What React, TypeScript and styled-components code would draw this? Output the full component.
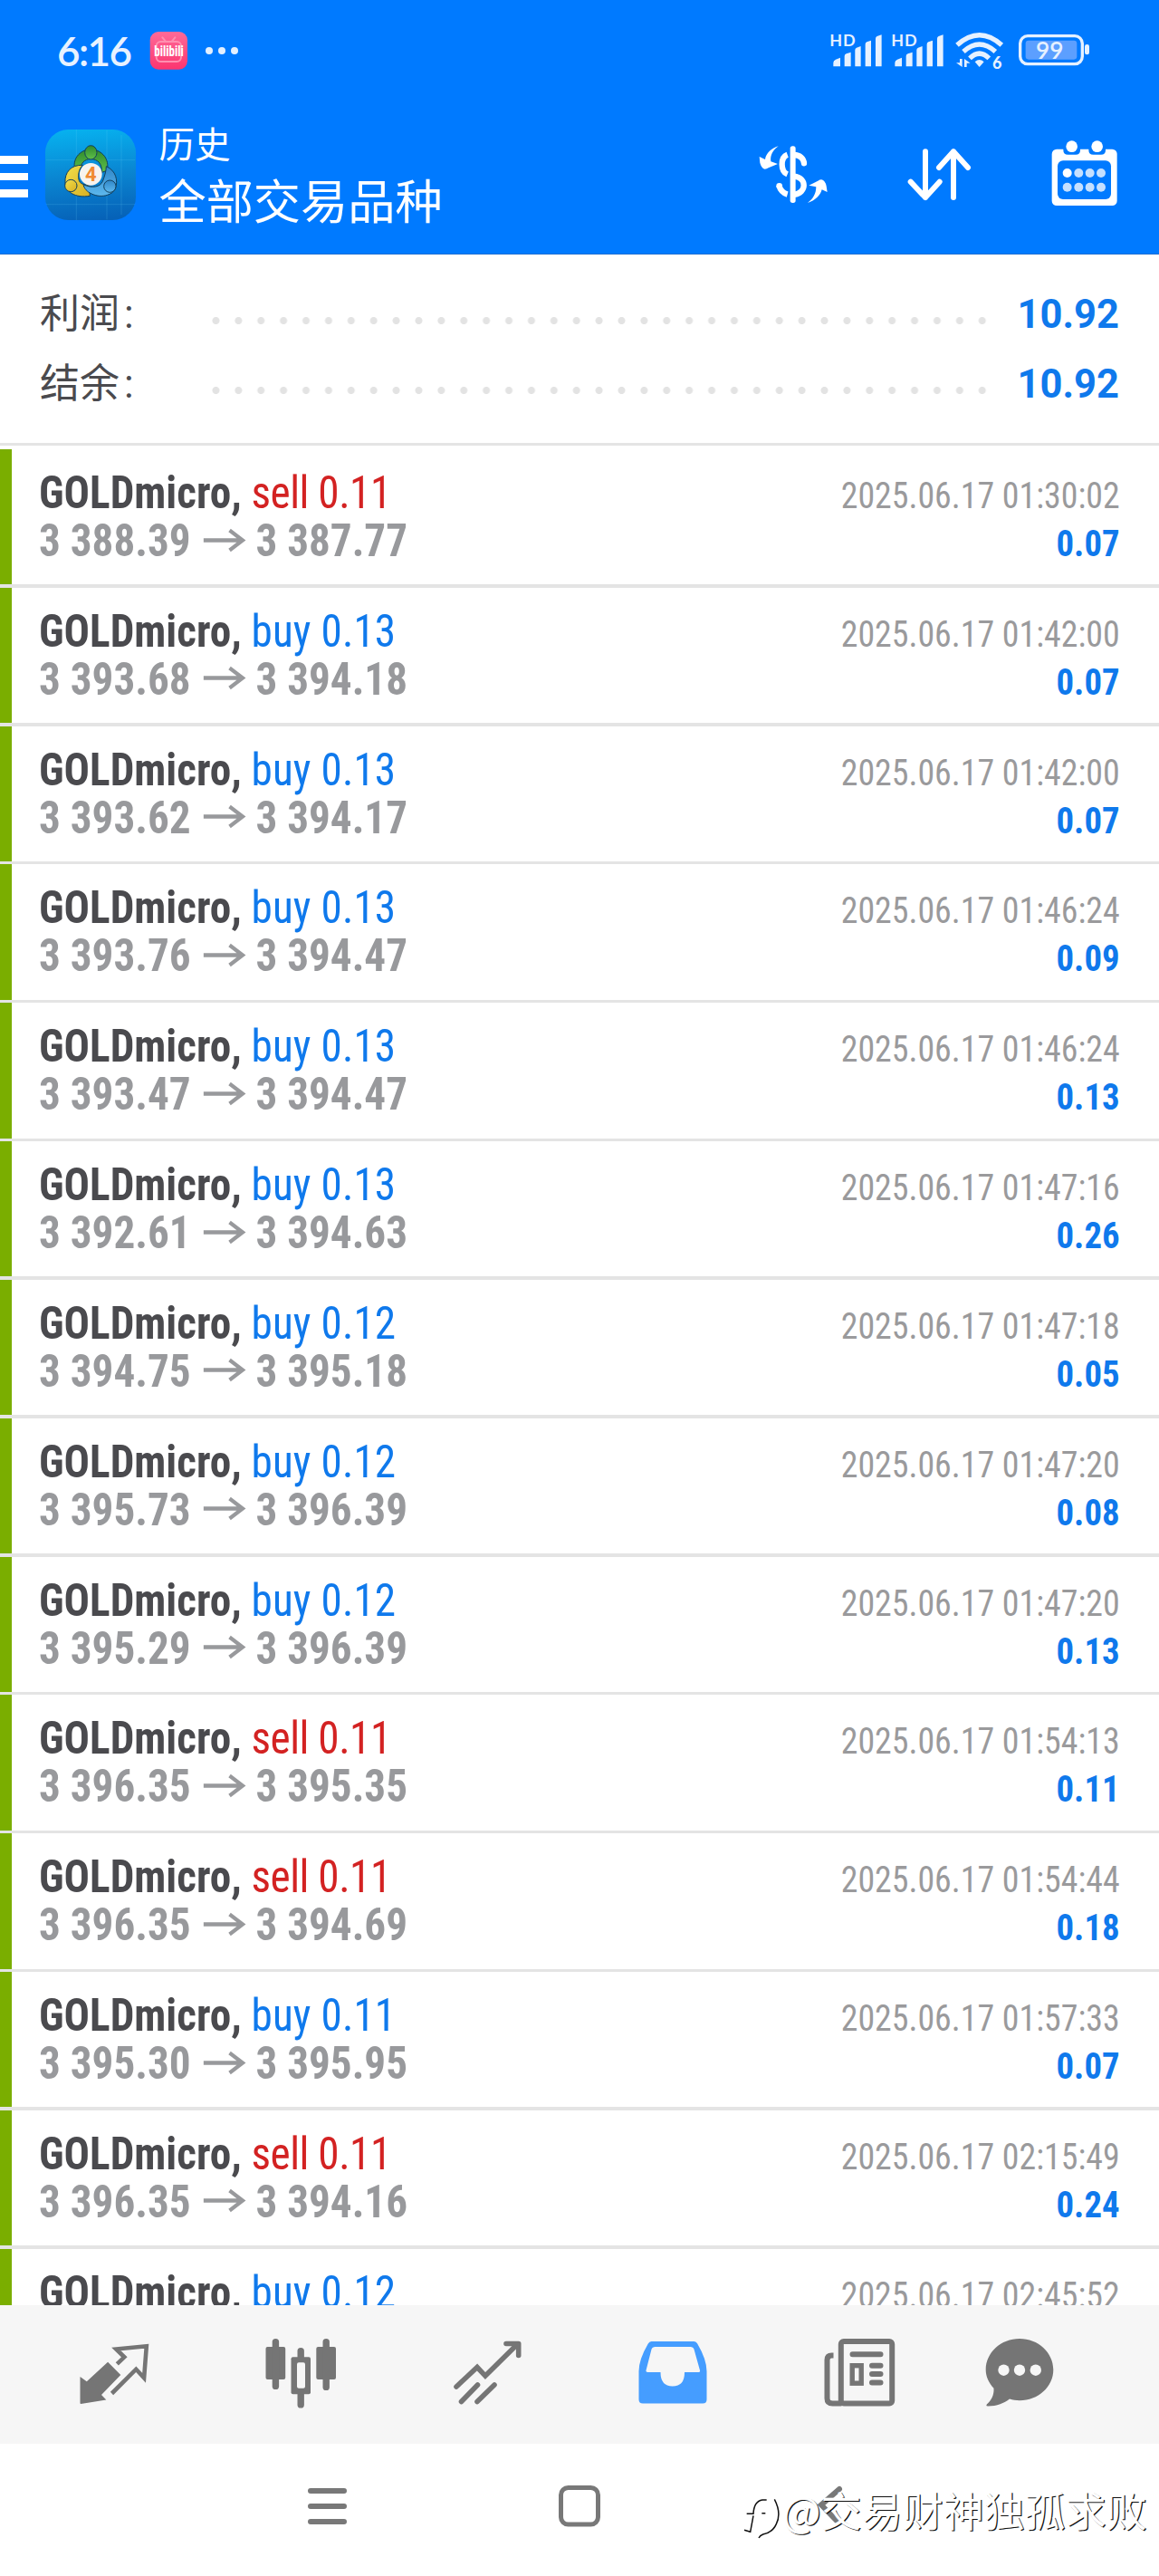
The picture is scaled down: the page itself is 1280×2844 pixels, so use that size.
import styled, { createGlobalStyle } from "styled-components";

const colors = {
  primary: "#007aff",
  buy: "#0f79ec",
  sell: "#d32222",
  dark: "#4a4a4e",
  grey: "#98999c",
  line: "#e4e4e4",
  profit: "#7aae00",
  tab: "#757575",
};

const GlobalStyle = createGlobalStyle`
  * {
    box-sizing: border-box;
  }
  body {
    margin: 0;
    background: #fff;
    font-family: Roboto, "Noto Sans CJK SC", sans-serif;
  }
  svg {
    display: block;
    flex: none;
    overflow: visible;
  }
`;

const Phone = styled.div`
  width: 1280px;
  height: 2844px;
  display: flex;
  flex-direction: column;
  overflow: hidden;
  background: #fff;
`;

const Header = styled.header`
  flex: none;
  height: 281px;
  background: ${colors.primary};
  border-bottom: 1px solid #1c6fd2;
  color: #fff;
`;

const StatusBar = styled.div`
  height: 111px;
  padding: 0 76px 0 63px;
  display: flex;
  align-items: center;
  justify-content: space-between;
`;

const StatusGroup = styled.div`
  display: flex;
  align-items: center;
`;

const Clock = styled.span`
  width: 102px;
  font: 600 44px/50px Lato, sans-serif;
  letter-spacing: -1.6px;
  color: #e8f2ff;
`;

const Dots = styled.div`
  display: flex;
  gap: 6.3px;
  margin-left: 19px;

  i {
    width: 8px;
    height: 8px;
    border-radius: 50%;
    background: #e3f0ff;
  }
`;

const Signals = styled.div`
  display: flex;
  gap: 9.4px;
  margin-right: 12px;
`;

const Toolbar = styled.div`
  height: 160px;
  display: flex;
  align-items: center;
  padding-right: 45px;
`;

const Burger = styled.div`
  width: 31px;
  height: 46px;
  margin-top: 8px;
  display: flex;
  flex-direction: column;
  justify-content: space-between;

  i {
    height: 8.6px;
    background: #fff;
  }
`;

const AppBadge = styled.div`
  margin: 4px 26px 0 18.5px;
`;

const Titles = styled.div`
  flex: 1;
  margin-top: 6px;
  font-family: "Noto Sans CJK SC", sans-serif;
`;

const Subtitle = styled.div`
  font-size: 39.6px;
  line-height: 50px;
`;

const Title = styled.div`
  font-size: 52.2px;
  line-height: 74px;
`;

const Actions = styled.div`
  display: flex;
  gap: 85px;
`;

const Summary = styled.section`
  flex: none;
  height: 211px;
  padding: 27px 44px 0 44px;
  border-bottom: 3px solid ${colors.line};
`;

const SummaryRow = styled.div`
  height: 77.3px;
  display: flex;
  align-items: center;
`;

const SummaryLabel = styled.span`
  width: 182px;
  font-size: 44px;
  line-height: 60px;
  color: ${colors.dark};

  i {
    font-style: normal;
    margin-left: 5px;
  }
`;

const Leader = styled.span`
  width: 871.5px;
  height: 10px;
  margin-top: 14px;
  background: radial-gradient(circle, #e3e3e3 3.6px, transparent 4.4px) 0 0 /
    24.9px 10px;
`;

const SummaryValue = styled.b`
  flex: 1;
  margin-top: 3px;
  text-align: right;
  font-size: 43.5px;
  font-weight: 700;
  line-height: 60px;
  color: ${colors.buy};
`;

const DealList = styled.main`
  flex: none;
  height: 2052.5px;
  padding-top: 4px;
  overflow: hidden;
`;

const DealRow = styled.article`
  height: 152.83px;
  display: flex;
  justify-content: space-between;
  padding: 22px 43.5px 0 30px;
  border-left: 13px solid ${colors.profit};
  position: relative;
  font-family: "Roboto Condensed", Roboto, sans-serif;
  font-stretch: 75%;
  white-space: pre;

  &::after {
    content: "";
    position: absolute;
    left: -13px;
    right: 0;
    bottom: 0;
    height: 3.5px;
    background: ${colors.line};
  }
`;

const DealInfo = styled.div`
  font-size: 49.3px;
  line-height: 53px;
  transform: scaleX(0.957);
  transform-origin: left;
`;

const Symbol = styled.b`
  font-weight: 700;
  color: ${colors.dark};
`;

const Side = styled.span<{ $side: "buy" | "sell" }>`
  color: ${(p) => colors[p.$side]};
  letter-spacing: ${(p) => (p.$side === "sell" ? "-0.5px" : "0.1px")};
`;

const Prices = styled.div`
  display: flex;
  align-items: center;
  font-weight: 700;
  color: ${colors.grey};

  svg {
    margin: 0 13px 0 15px;
  }
`;

const DealMeta = styled.div`
  padding-top: 2px;
  font-size: 41.5px;
  line-height: 53px;
  text-align: right;
`;

const Time = styled.div`
  color: #9a9a9c;
  transform: scaleX(0.912);
  transform-origin: right;
`;

const Profit = styled.div`
  font-weight: 700;
  color: ${colors.buy};
  transform: scaleX(0.935);
  transform-origin: right;
`;

const TabBar = styled.nav`
  flex: none;
  height: 153.3px;
  padding: 0 0 3px 23.7px;
  display: grid;
  grid-template-columns: repeat(5, 205.6px) 148px;
  align-items: center;
  justify-items: center;
  background: #f6f6f6;
  color: ${colors.tab};
`;

const SystemNav = styled.footer`
  flex: 1;
  position: relative;
  display: flex;
  padding: 44px 0 0 338px;
  color: #787878;
`;

const NavSlot = styled.div<{ $gap?: number }>`
  margin-left: ${(p) => p.$gap ?? 0}px;
`;

const Watermark = styled.div`
  position: absolute;
  left: 820px;
  top: 38px;
  display: flex;
  align-items: center;
  color: #fff;
  font: 400 45px/70px "Noto Sans CJK SC", sans-serif;
  text-shadow: 1.3px 1.3px 0 #111;
  white-space: nowrap;

  span {
    margin-left: -2px;
  }
`;

const BiliIcon = () => (
  <svg width="42.7" height="43.3" viewBox="45 40 128 130">
    <defs>
      <linearGradient id="bili" x1="0" y1="0" x2="0" y2="1">
        <stop offset="0" stopColor="#ff6a98" />
        <stop offset="1" stopColor="#fb3570" />
      </linearGradient>
    </defs>
    <rect x="47" y="43" width="124" height="125" rx="28" fill="url(#bili)" />
    <g fill="none" stroke="#ff8fb0" strokeWidth="6" strokeLinecap="round">
      <rect x="68" y="76" width="82" height="66" rx="14" />
      <path d="M88 62l10 12M130 62l-10 12" />
    </g>
    <text
      x="61"
      y="124"
      fill="#fff"
      fontFamily="Roboto Condensed"
      fontWeight="700"
      fontSize="48"
      textLength="97"
      lengthAdjust="spacingAndGlyphs"
    >
      bilibili
    </text>
  </svg>
);

const SignalIcon = () => (
  <svg width="58.3" height="41.7" viewBox="50 45 175 125" fill="#e6f1ff">
    <text x="48" y="93" fontFamily="Lato" fontWeight="700" fontSize="54" textLength="85">
      HD
    </text>
    <path d="M60 160v-12q0-8 8-11l15-6v29zM97 160v-34q0-6 6-8l15-5v47zM132 160v-54q0-6 5-8l14-5v67zM166 160v-73q0-6 5-8l14-5v86zM200 160V68q0-6 5-8l15-5v105z" />
  </svg>
);

const WifiIcon = () => (
  <svg width="53.3" height="43.3" viewBox="465 45 160 130" fill="#e6f1ff">
    <g fill="none" stroke="#e6f1ff" strokeWidth="16">
      <path d="M471 92Q545 26 619 92" />
      <path d="M492 114Q545 66 598 114" />
      <path d="M513 136Q545 105 577 136" />
    </g>
    <path d="M530 148q15-14 30 0l-15 17z" />
    <path d="M480 138h8v27l-20-14h12zM495 165v-27l20 14h-12v13z" />
    <text x="588" y="170" fontFamily="Lato" fontWeight="900" fontSize="54">
      6
    </text>
  </svg>
);

const BatteryIcon = () => (
  <svg width="80" height="38" viewBox="671 49 240 114">
    <rect x="679" y="60" width="206" height="93" rx="25" fill="none" stroke="#e6f1ff" strokeWidth="10" />
    <rect x="697" y="75" width="170" height="63" rx="10" fill="#5c9fff" />
    <rect x="893" y="88" width="15" height="34" rx="7" fill="#e6f1ff" />
    <text x="731" y="135" fill="#e6f1ff" fontFamily="Lato" fontWeight="600" fontSize="79">
      99
    </text>
  </svg>
);

const AppIcon = () => (
  <svg width="100" height="100" viewBox="148 42 300 300">
    <defs>
      <linearGradient id="tile" x1="0.4" y1="0" x2="0.5" y2="1">
        <stop offset="0" stopColor="#07b0ee" />
        <stop offset="0.5" stopColor="#0a86d2" />
        <stop offset="1" stopColor="#0662b8" />
      </linearGradient>
      <linearGradient id="green" x1="0" y1="0" x2="0" y2="1">
        <stop offset="0" stopColor="#2f8a2c" />
        <stop offset="1" stopColor="#5fc04a" />
      </linearGradient>
      <linearGradient id="gold" x1="0" y1="0" x2="1" y2="1">
        <stop offset="0" stopColor="#f2e04c" />
        <stop offset="1" stopColor="#d8b022" />
      </linearGradient>
      <linearGradient id="sky" x1="0" y1="0" x2="0" y2="1">
        <stop offset="0" stopColor="#2f86c8" />
        <stop offset="1" stopColor="#5db8ee" />
      </linearGradient>
    </defs>
    <rect x="148" y="42" width="300" height="300" rx="76" fill="url(#tile)" />
    <path
      d="M251 42v300M400 60v264M150 143h296M150 290h296M352 44v296"
      stroke="#7fe0ff"
      strokeOpacity="0.16"
      strokeWidth="3"
    />
    <g stroke="#123f5c" strokeWidth="3">
      <path
        d="M246 176C238 140 258 112 299 106c40 6 62 34 54 72l-18 6c2-30-14-44-36-44s-34 14-34 34z"
        fill="url(#green)"
      />
      <path
        d="M272 160c-40-2-60 26-58 56 0 32 32 54 82 46l-4-36c-22 0-34-8-34-26 0-16 2-26 14-40z"
        fill="url(#gold)"
      />
      <path
        d="M350 164c32 14 40 46 30 74-10 22-50 34-84 14-14-8-20-18-22-28 30 14 56 8 64-10 6-16 12-34 12-50z"
        fill="url(#sky)"
      />
      <ellipse cx="299" cy="118" rx="20" ry="23" fill="url(#green)" />
      <circle cx="233" cy="228" r="20" fill="url(#gold)" />
      <circle cx="362" cy="230" r="20" fill="url(#sky)" />
    </g>
    <circle cx="299" cy="190" r="37" fill="#f7f3ee" />
    <text
      x="299"
      y="214"
      textAnchor="middle"
      fill="#f08a32"
      fontFamily="Roboto"
      fontWeight="700"
      fontSize="66"
    >
      4
    </text>
  </svg>
);

const CurrencyIcon = () => (
  <svg width="78.3" height="76" viewBox="110 72 235 228" fill="#fff">
    <rect x="217" y="97" width="18" height="188" rx="8" />
    <g fill="none" stroke="#fff" strokeWidth="19">
      <path d="M208 125C184 134 184 180 208 190" />
      <path d="M230 126C250 126 262 140 263 154" strokeLinecap="round" />
      <path d="M230 197C274 202 272 252 230 258" />
      <path d="M208 257C194 253 184 242 180 228" />
    </g>
    <circle cx="181" cy="229" r="10" />
    <path d="M178 97C156 103 137 120 134 141L115 132 117 152q4 18 16 21 6 0 12-4l31-13-23-8C150 127 160 110 178 97z" />
    <path d="M275 285C300 277 317 261 322 241L340 249 337 229q-4-18-16-21-6 0-12 4l-30 15 24 5C303 254 294 271 275 285z" />
  </svg>
);

const SortIcon = () => (
  <svg
    width="75"
    height="76"
    viewBox="600 72 225 228"
    fill="none"
    stroke="#fff"
    strokeWidth="18"
    strokeLinecap="round"
    strokeLinejoin="round"
  >
    <path d="M666 115v152M617 215l49 52 47-52M759 267V115M711 168l48-53 48 53" />
  </svg>
);

const CalendarIcon = () => (
  <svg width="75" height="76" viewBox="1080 72 225 228">
    <rect x="1085" y="107" width="216" height="187" rx="16" fill="#fff" />
    <g fill={colors.primary}>
      <rect x="1104" y="145" width="177" height="128" rx="18" />
      <path d="M1123 98h56v12q0 15-15 15h-26q-15 0-15-15zM1207 98h56v12q0 15-15 15h-26q-15 0-15-15z" />
    </g>
    <g fill="#fff">
      <circle cx="1151" cy="98" r="19" />
      <circle cx="1235" cy="98" r="19" />
    </g>
    {[186, 233].map((cy) =>
      [1136, 1174, 1211, 1248].map((cx) => (
        <circle
          key={`${cx}-${cy}`}
          cx={cx}
          cy={cy}
          r="15"
          fill={cx === 1136 && cy === 186 ? "#fff" : "#c5e0ff"}
        />
      ))
    )}
  </svg>
);

const PriceArrow = () => (
  <svg width="47" height="30" viewBox="0 0 47 30" fill="none" stroke="currentColor" strokeWidth="4.4">
    <path d="M0 13.500h45M30 2.500l15 11-15 11" />
  </svg>
);

// Tab bar icons
const QuotesIcon = () => (
  <svg width="80" height="80" viewBox="87.5 100 80 80">
    <path d="M90 144l7.3 5.3 23.3-21.6 14.2 14.4-21.3 22 5.3 5.4-28 4.5q-.8-.2-.8-1z" fill="currentColor" />
    <path
      d="M125 162.5l26.8-26.8 8.8 9.6 2.7-35-33.5 3.2 9 8.8-8 7.6"
      fill="none"
      stroke="currentColor"
      strokeWidth="4.6"
    />
  </svg>
);

const CandlesIcon = () => (
  <svg width="80" height="80" viewBox="292 100 80 80" fill="currentColor">
    <rect x="293.5" y="111" width="21.7" height="36" rx="2" />
    <rect x="300.7" y="102" width="7.4" height="56" rx="3.6" />
    <rect x="349.3" y="111" width="21.7" height="36" rx="2" />
    <rect x="356.5" y="102" width="7.4" height="57" rx="3.6" />
    <rect x="328.5" y="112" width="7.4" height="66.5" rx="3.6" />
    <rect x="321.5" y="122.3" width="21.5" height="41" rx="2" />
    <rect x="328" y="128.3" width="9" height="28.5" rx="2" fill="#f6f6f6" />
  </svg>
);

const TrendIcon = () => (
  <svg
    width="80"
    height="80"
    viewBox="497.5 100 80 80"
    fill="none"
    stroke="currentColor"
    strokeWidth="5.6"
  >
    <path d="M503.5 155l23-21.5 9 9.6L571 108" strokeLinecap="round" />
    <path d="M558.5 107.5h13.7v13" strokeLinecap="round" strokeLinejoin="round" />
    <path d="M509 171.5l18-18.5M526.5 171.5l19-18.5" strokeLinecap="round" />
  </svg>
);

const InboxIcon = () => (
  <svg width="80" height="80" viewBox="63.5 100 80 80">
    <path
      fillRule="evenodd"
      fill="#459dff"
      d="M80 105h47q2.500 0 3.700 2.500Q141 125 141 138v31q0 4.500-4.500 4.500h-66Q66 173.500 66 169v-31q0-13 10.300-30.500Q77.500 105 80 105zM84 111q-3 0-4 2.800L74 137q-.4 2 1.600 2H90q0 15.500 13.300 15.500T116.500 139H132q2 0 1.500-2L127 113.800q-1-2.800-4-2.800z"
    />
  </svg>
);

const NewsIcon = () => (
  <svg width="80" height="80" viewBox="269.5 100 80 80" fill="none" stroke="currentColor" strokeWidth="6">
    <rect x="289.3" y="105" width="56.4" height="68.500" rx="3" />
    <path d="M281 120.500h-2q-5 0-5 5V168q0 5.500 6 5.500h10" />
    <path d="M302 119.300h31M323.500 131.800h9.500M323.500 141h9.500M323.500 150.500h9.500" strokeLinecap="round" />
    <rect x="301.700" y="131.700" width="10" height="19.500" strokeWidth="5.400" />
  </svg>
);

const ChatIcon = () => (
  <svg width="80" height="80" viewBox="446 100 80 80">
    <path
      fill="currentColor"
      d="M486 102c20.500 0 37.300 15.300 37.300 34.200s-16.800 34-37.300 34c-4 0-7.600-.6-11-1.700-6 4.500-14 8-24 8-2 0-2-1-1-2.300 4.500-4 8-9.500 7.500-17.500-5.500-6-8.800-13-8.800-20.500C448.700 117.300 465.500 102 486 102z"
    />
    <g fill="#f6f6f6">
      <circle cx="468.500" cy="136.700" r="6.200" />
      <circle cx="486" cy="136.700" r="6.200" />
      <circle cx="503.800" cy="136.700" r="6.200" />
    </g>
  </svg>
);

const LogoMark = () => (
  <svg width="46" height="62" viewBox="0 0 138 186" fill="none" stroke="#111" strokeWidth="4.500">
    <path d="M6 160l20 6 10-54M14 106h22q2-42 30-46h14" />
    <path d="M106 58q24 46 6 82-12 28-44 34-10 4-14 12M64 104h12" />
  </svg>
);

type Deal = {
  side: "buy" | "sell";
  volume: string;
  open: string;
  close: string;
  time: string;
  profit: string;
};

const deal = (
  side: Deal["side"],
  volume: string,
  open: string,
  close: string,
  time: string,
  profit: string
): Deal => ({ side, volume, open, close, time, profit });

const deals: Deal[] = [
  deal("sell", "0.11", "3 388.39", "3 387.77", "01:30:02", "0.07"),
  deal("buy", "0.13", "3 393.68", "3 394.18", "01:42:00", "0.07"),
  deal("buy", "0.13", "3 393.62", "3 394.17", "01:42:00", "0.07"),
  deal("buy", "0.13", "3 393.76", "3 394.47", "01:46:24", "0.09"),
  deal("buy", "0.13", "3 393.47", "3 394.47", "01:46:24", "0.13"),
  deal("buy", "0.13", "3 392.61", "3 394.63", "01:47:16", "0.26"),
  deal("buy", "0.12", "3 394.75", "3 395.18", "01:47:18", "0.05"),
  deal("buy", "0.12", "3 395.73", "3 396.39", "01:47:20", "0.08"),
  deal("buy", "0.12", "3 395.29", "3 396.39", "01:47:20", "0.13"),
  deal("sell", "0.11", "3 396.35", "3 395.35", "01:54:13", "0.11"),
  deal("sell", "0.11", "3 396.35", "3 394.69", "01:54:44", "0.18"),
  deal("buy", "0.11", "3 395.30", "3 395.95", "01:57:33", "0.07"),
  deal("sell", "0.11", "3 396.35", "3 394.16", "02:15:49", "0.24"),
  deal("buy", "0.12", "", "", "02:45:52", ""),
];

const summary = [
  { label: "利润", value: "10.92" },
  { label: "结余", value: "10.92" },
];

const App = () => {
  return (
    <Phone>
      <GlobalStyle />
      <Header>
        <StatusBar>
          <StatusGroup>
            <Clock>6:16</Clock>
            <BiliIcon />
            <Dots>
              <i />
              <i />
              <i />
            </Dots>
          </StatusGroup>
          <StatusGroup>
            <Signals>
              <SignalIcon />
              <SignalIcon />
            </Signals>
            <WifiIcon />
            <NavSlot $gap={15.5}>
              <BatteryIcon />
            </NavSlot>
          </StatusGroup>
        </StatusBar>
        <Toolbar>
          <Burger>
            <i />
            <i />
            <i />
          </Burger>
          <AppBadge>
            <AppIcon />
          </AppBadge>
          <Titles>
            <Subtitle>历史</Subtitle>
            <Title>全部交易品种</Title>
          </Titles>
          <Actions>
            <CurrencyIcon />
            <SortIcon />
            <CalendarIcon />
          </Actions>
        </Toolbar>
      </Header>

      <Summary>
        {summary.map((item) => (
          <SummaryRow key={item.label}>
            <SummaryLabel>
              {item.label}
              <i>:</i>
            </SummaryLabel>
            <Leader />
            <SummaryValue>{item.value}</SummaryValue>
          </SummaryRow>
        ))}
      </Summary>

      <DealList>
        {deals.map((d, index) => (
          <DealRow key={index}>
            <DealInfo>
              <div>
                <Symbol>GOLDmicro, </Symbol>
                <Side $side={d.side}>
                  {d.side} {d.volume}
                </Side>
              </div>
              {d.open && (
                <Prices>
                  {d.open}
                  <PriceArrow />
                  {d.close}
                </Prices>
              )}
            </DealInfo>
            <DealMeta>
              <Time>2025.06.17 {d.time}</Time>
              <Profit>{d.profit}</Profit>
            </DealMeta>
          </DealRow>
        ))}
      </DealList>

      <TabBar>
        <QuotesIcon />
        <CandlesIcon />
        <TrendIcon />
        <InboxIcon />
        <NewsIcon />
        <ChatIcon />
      </TabBar>

      <SystemNav>
        <NavSlot>
          <svg width="48" height="50" viewBox="0 0 48 50" stroke="currentColor" strokeWidth="6" strokeLinecap="round">
            <path d="M5 8h37M5 25h37M5 42h37" />
          </svg>
        </NavSlot>
        <NavSlot $gap={228.5}>
          <svg width="50" height="50" viewBox="0 0 50 50" fill="none" stroke="currentColor" strokeWidth="5">
            <rect x="4.500" y="4.500" width="41" height="40.500" rx="8" />
          </svg>
        </NavSlot>
        <NavSlot $gap={235}>
          <svg width="40" height="50" viewBox="0 0 40 50" fill="none" stroke="currentColor" strokeWidth="6" strokeLinecap="round">
            <path d="M27 6L7 23.500l17 17.500" />
          </svg>
        </NavSlot>
        <Watermark>
          <LogoMark />
          <span>@交易财神独孤求败</span>
        </Watermark>
      </SystemNav>
    </Phone>
  );
};

export default App;
